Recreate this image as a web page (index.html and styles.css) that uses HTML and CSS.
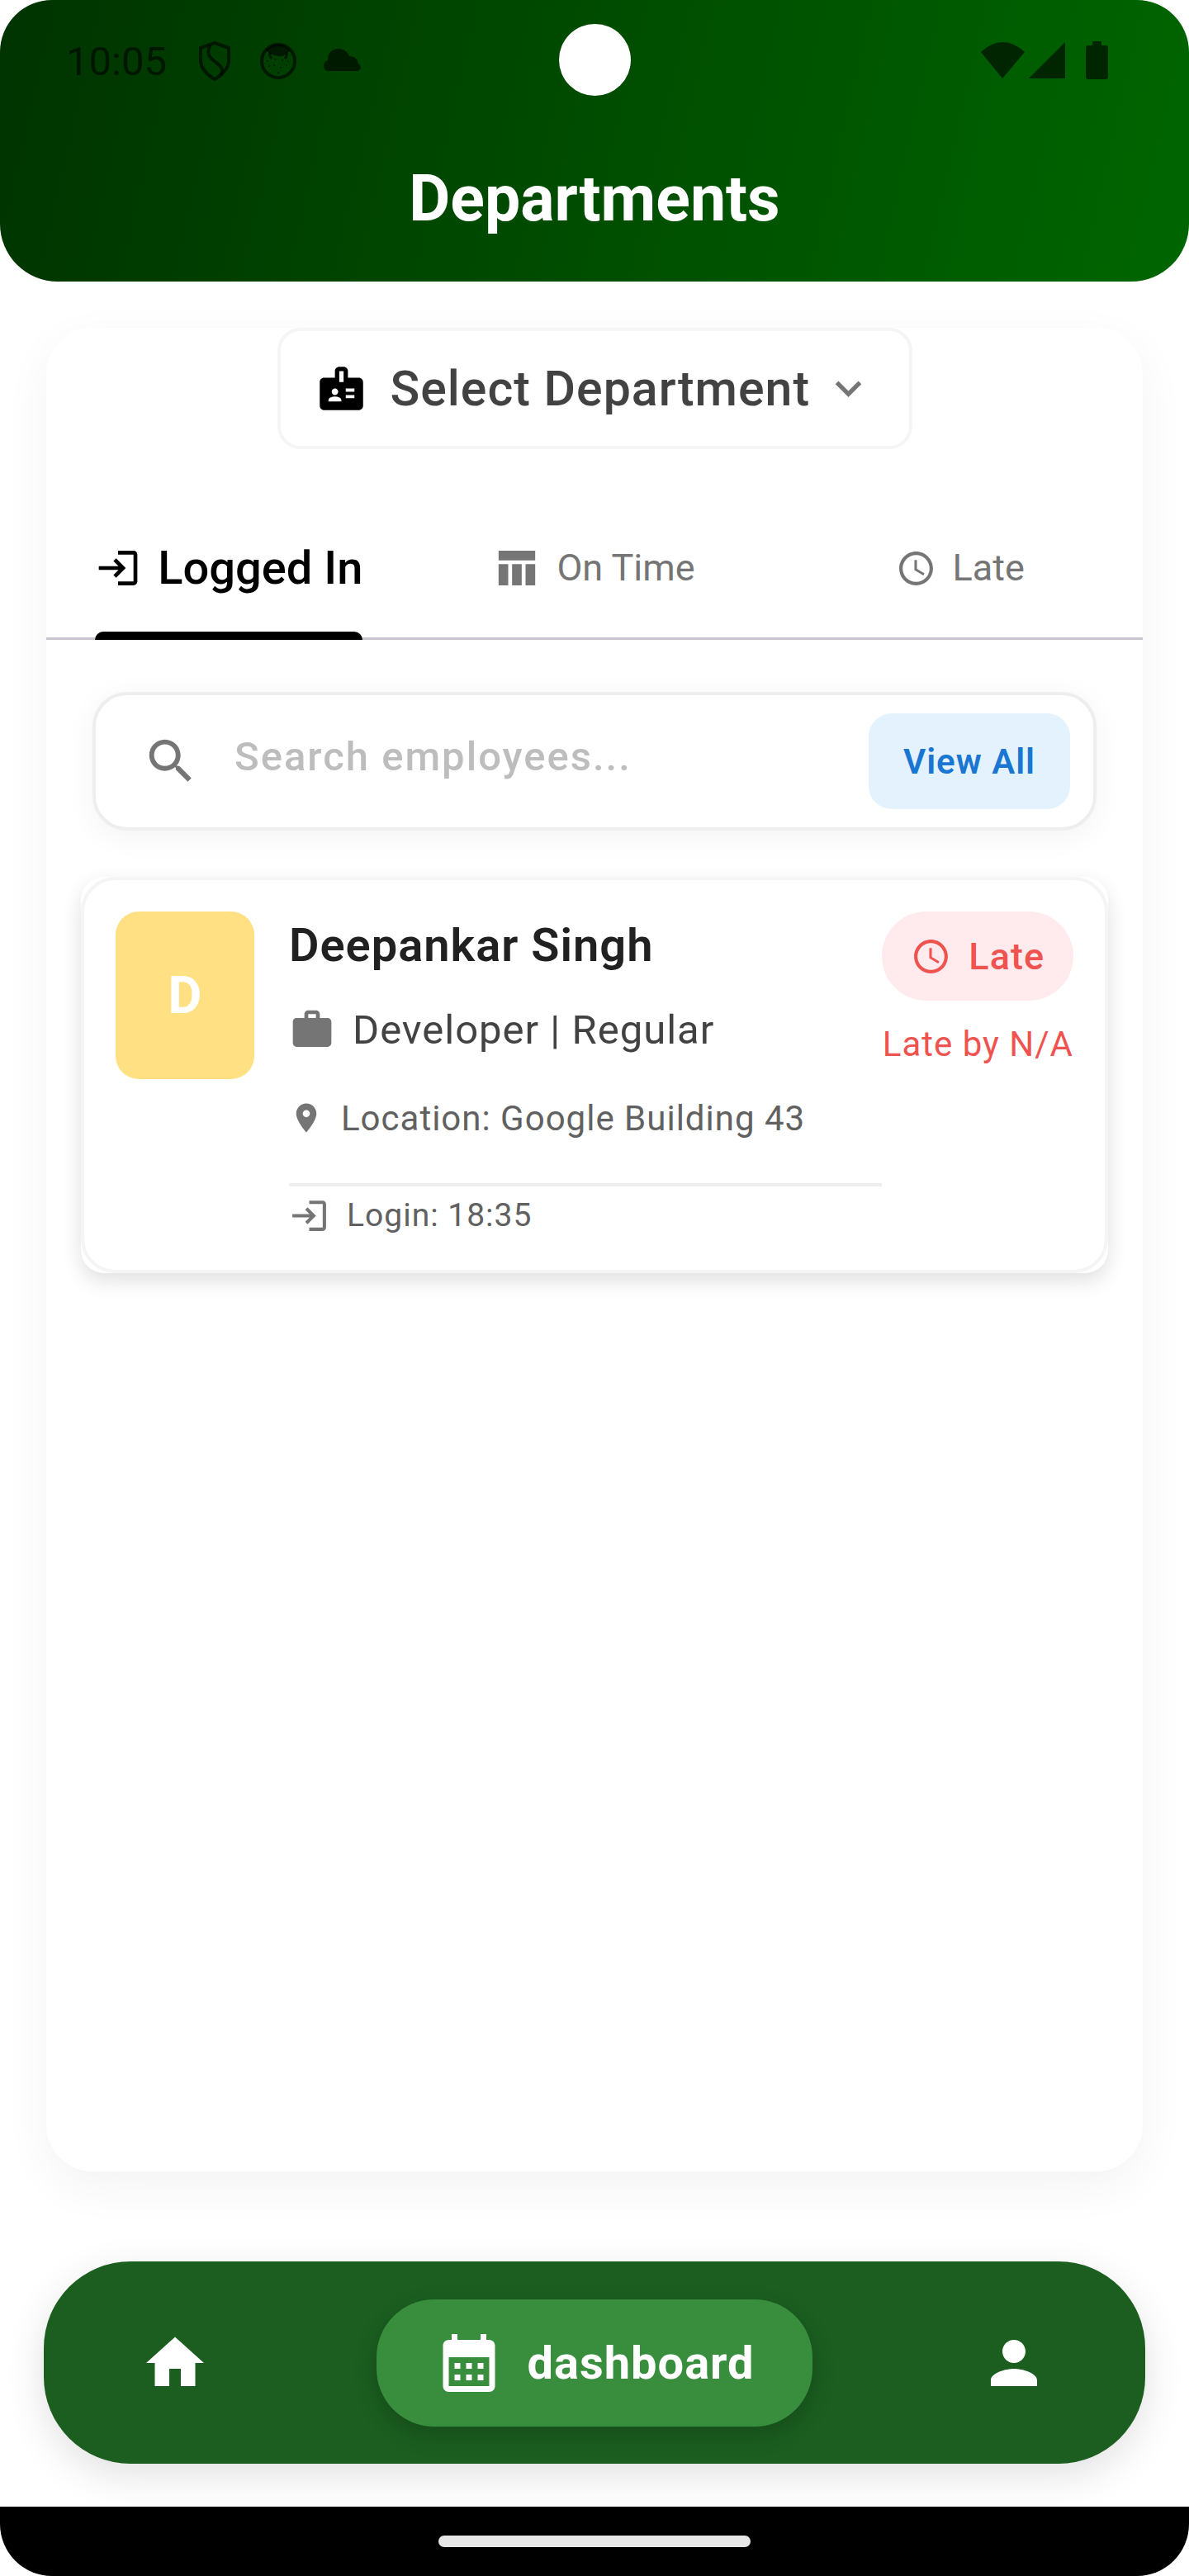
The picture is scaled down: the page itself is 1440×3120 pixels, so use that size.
FILE: index.html
```html
<!DOCTYPE html>
<html lang="en">
<head>
<meta charset="utf-8">
<meta name="viewport" content="width=device-width, initial-scale=1">
<title>Departments</title>
<link rel="stylesheet" href="styles.css">
</head>
<body>
<svg class="symbols" aria-hidden="true">
  <symbol id="login" viewBox="0 0 24 24"><path d="M11 7 9.600 8.400l2.600 2.600H2v2h10.200l-2.600 2.600L11 17l5-5-5-5zm9 12h-8v2h8c1.100 0 2-.9 2-2V5c0-1.100-.9-2-2-2h-8v2h8v14z"/></symbol>
  <symbol id="clock" viewBox="0 0 24 24"><path d="M11.990 2C6.470 2 2 6.480 2 12s4.470 10 9.990 10C17.520 22 22 17.520 22 12S17.520 2 11.990 2zM12 20c-4.420 0-8-3.580-8-8s3.580-8 8-8 8 3.580 8 8-3.580 8-8 8zm.5-13H11v6l5.250 3.150.75-1.230-4.500-2.670z"/></symbol>
</svg>

<header class="header">
  <div class="status">
    <div class="status-left">
      <time class="status-time">10:05</time>
      <svg class="status-icon" viewBox="0 0 49 49"><g fill="none" stroke="currentColor" stroke-width="4" stroke-linejoin="round"><path d="M24 2 41 8V23C41 33 34 40 24 46 14 40 7 33 7 23V8Z"/><path d="M19 5C12 16 20 21 26 26 33 31 35 36 31 41"/></g></svg>
      <svg class="status-icon" viewBox="0 0 49 49"><circle cx="24" cy="24" r="20" fill="none" stroke="currentColor" stroke-width="4"/><path fill="currentColor" d="M9 11Q24-5 39 11L34 15Q30 19 24 18T14 15Z"/><path d="m14 13q-1 5 2 8m18-8q1 5-2 8" fill="none" stroke="currentColor" stroke-width="3"/><g fill="currentColor"><circle cx="20" cy="22" r="1"/><circle cx="29" cy="23" r="1"/><circle cx="11" cy="24" r="1"/><circle cx="13" cy="30" r="1"/><circle cx="19" cy="29" r="1"/><circle cx="27" cy="32" r="1"/><circle cx="36" cy="24" r="1"/><circle cx="34" cy="29" r="1"/><circle cx="24" cy="38" r="1"/></g></svg>
      <svg class="status-icon" viewBox="0 0 49 49"><path fill="currentColor" d="M6 36a7 7 0 0 1 1-13C7 14 12 9 20 9c7 0 11 4 13 9 6 0 10 3 11 9a5 5 0 0 1 0 9Z"/></svg>
    </div>
    <div class="camera"></div>
    <div class="status-right">
      <svg class="wifi" viewBox="0 0 53 44"><path fill="currentColor" d="M0 12Q26-12 53 12L26 44Z"/></svg>
      <svg class="signal" viewBox="0 0 44 44"><path fill="currentColor" d="M44 0V44H0Z"/></svg>
      <svg class="battery" viewBox="0 0 27 46"><path fill="currentColor" d="M8 0H19V5H24Q27 5 27 8V43Q27 46 24 46H3Q0 46 0 43V8Q0 5 3 5H8Z"/></svg>
    </div>
  </div>
  <h1 class="title">Departments</h1>
</header>

<main class="panel">
  <div class="dropdown">
    <svg class="icon-lg badge-icon" viewBox="0 0 24 24"><path fill-rule="evenodd" d="M20 7h-5V4c0-1.100-.9-2-2-2h-2c-1.100 0-2 .9-2 2v3H4c-1.100 0-2 .9-2 2v11c0 1.100.9 2 2 2h16c1.100 0 2-.9 2-2V9c0-1.100-.9-2-2-2zM9 12c.830 0 1.500.670 1.500 1.500S9.830 15 9 15s-1.500-.670-1.500-1.500S8.170 12 9 12zm3 6H6v-.430c0-.6.360-1.150.920-1.390.640-.280 1.340-.430 2.080-.430s1.440.150 2.080.430c.550.240.920.780.920 1.390V18zm1-9h-2V4h2v5zm5 7.500h-4V15h4v1.500zm0-3h-4V12h4v1.500z"/></svg>
    <select class="dropdown-select" aria-label="Department"><option>Select Department</option></select>
    <svg class="icon-lg chevron" viewBox="0 0 24 24"><path d="M7.410 8.590 12 13.170l4.590-4.580L18 10l-6 6-6-6z"/></svg>
  </div>

  <div class="tabs" role="tablist">
    <button class="tab tab-active" role="tab" aria-selected="true"><span class="tab-body"><svg class="icon-md"><use href="#login"/></svg>Logged In</span></button>
    <button class="tab" role="tab" aria-selected="false"><span class="tab-body"><svg class="icon-md" viewBox="0 0 24 24"><path d="M2.500 3h19v5h-19zM2.500 10h5v11h-5zM9.500 10h5v11h-5zM16.500 10h5v11h-5z"/></svg>On Time</span></button>
    <button class="tab" role="tab" aria-selected="false"><span class="tab-body"><svg class="icon-sm"><use href="#clock"/></svg>Late</span></button>
  </div>

  <form class="search" role="search">
    <svg class="search-icon" viewBox="0 0 24 24"><path d="M15.500 14h-.790l-.280-.270C15.410 12.590 16 11.110 16 9.500 16 5.910 13.090 3 9.500 3S3 5.910 3 9.500 5.910 16 9.500 16c1.610 0 3.090-.590 4.230-1.570l.270.280v.790l5 4.990L20.490 19l-4.990-5zm-6 0C7.010 14 5 11.990 5 9.500S7.010 5 9.500 5 14 7.010 14 9.500 11.990 14 9.500 14z"/></svg>
    <input class="search-input" type="text" placeholder="Search employees..." aria-label="Search employees">
    <button class="view-all" type="button">View All</button>
  </form>

  <article class="employee">
    <div class="employee-inner">
      <div class="avatar">D</div>
      <div class="details">
        <h2 class="name">Deepankar Singh</h2>
        <p class="row role"><svg class="icon-md" viewBox="0 0 24 24"><path fill-rule="evenodd" d="M20 6h-4V4c0-1.110-.890-2-2-2h-4c-1.110 0-2 .890-2 2v2H4c-1.110 0-2 .890-2 2v11c0 1.110.890 2 2 2h16c1.110 0 2-.890 2-2V8c0-1.110-.890-2-2-2zm-6 0h-4V4h4v2z"/></svg>Developer | Regular</p>
        <p class="row location"><svg class="icon-xs" viewBox="0 0 24 24"><path d="M12 2C8.130 2 5 5.130 5 9c0 5.250 7 13 7 13s7-7.750 7-13c0-3.870-3.130-7-7-7zm0 9.500c-1.380 0-2.500-1.120-2.500-2.500s1.120-2.500 2.500-2.500 2.500 1.120 2.500 2.500-1.120 2.500-2.500 2.500z"/></svg>Location: Google Building 43</p>
        <hr class="rule">
        <p class="row login"><svg class="icon-sm"><use href="#login"/></svg>Login: 18:35</p>
      </div>
      <div class="state">
        <span class="late-badge"><svg class="icon-sm"><use href="#clock"/></svg>Late</span>
        <span class="late-by">Late by N/A</span>
      </div>
    </div>
  </article>
</main>

<nav class="nav">
  <a class="nav-link" href="#home" aria-label="Home"><svg class="icon-nav" viewBox="0 0 24 24"><path d="M10 20v-6h4v6h5v-8h3L12 3 2 12h3v8z"/></svg></a>
  <a class="nav-link nav-active" href="#dashboard"><svg class="icon-nav" viewBox="0 0 24 24"><path fill-rule="evenodd" d="M19 4h-1V2h-2v2H8V2H6v2H5c-1.100 0-2 .9-2 2v14c0 1.100.9 2 2 2h14c1.100 0 2-.9 2-2V6c0-1.100-.9-2-2-2zm0 16H5V10h14v10z"/><path d="M7 12h2v2H7zM11 12h2v2h-2zM15 12h2v2h-2zM7 16h2v2H7zM11 16h2v2h-2zM15 16h2v2h-2z"/></svg>dashboard</a>
  <a class="nav-link" href="#profile" aria-label="Profile"><svg class="icon-nav" viewBox="0 0 24 24"><path d="M12 12c2.210 0 4-1.790 4-4s-1.790-4-4-4-4 1.790-4 4 1.790 4 4 4zm0 2c-2.670 0-8 1.340-8 4v2h16v-2c0-2.660-5.330-4-8-4z"/></svg></a>
</nav>

<div class="system-bar"><div class="handle"></div></div>
</body>
</html>
```

FILE: styles.css
```css
* {
  box-sizing: border-box;
}

body {
  margin: 0;
  min-height: 100vh;
  display: flex;
  flex-direction: column;
  background: #fff;
  font-family: Roboto, "Liberation Sans", sans-serif;
}

h1, h2, p, hr {
  margin: 0;
}

button, input, select {
  font: inherit;
  border: 0;
  margin: 0;
  padding: 0;
  background: none;
}

svg {
  flex: none;
  display: block;
  fill: currentColor;
}

.symbols {
  display: none;
}

.icon-xs { width: 42px; height: 42px; }
.icon-sm { width: 49px; height: 49px; }
.icon-md { width: 56px; height: 56px; }
.icon-lg { width: 63px; height: 63px; }
.icon-nav { width: 84px; height: 84px; }

/* Header */
.header {
  padding: 29px 0 55px;
  border-radius: 63px 63px 70px 70px;
  background: linear-gradient(103deg, #030, #060);
}

.status {
  display: grid;
  grid-template-columns: 1fr auto 1fr;
  align-items: center;
  color: rgba(0, 0, 0, 0.6);
}

.status-left {
  display: flex;
  align-items: center;
  gap: 28px;
  padding: 4px 0 0 80px;
}

.status-time {
  margin-right: 6px;
  font-size: 49px;
  line-height: 58px;
}

.status-icon {
  width: 49px;
  height: 49px;
}

.camera {
  width: 87px;
  height: 87px;
  border-radius: 50%;
  background: #fff;
}

.status-right {
  display: flex;
  align-items: center;
  justify-content: flex-end;
  gap: 5px;
  padding-right: 98px;
}

.wifi { width: 53px; height: 44px; }
.signal { width: 44px; height: 44px; }
.battery { width: 27px; height: 46px; margin-left: 20px; }

.title {
  margin-top: 80px;
  color: #fff;
  font-size: 77px;
  font-weight: 700;
  line-height: 90px;
  text-align: center;
}

/* Main panel */
.panel {
  flex: 1;
  display: flex;
  flex-direction: column;
  margin: 56px 56px 109px;
  border-radius: 56px;
  background: #fff;
  box-shadow: 0 18px 56px rgba(0, 0, 0, 0.05);
}

.dropdown {
  align-self: center;
  display: flex;
  align-items: center;
  padding: 38px 42px;
  border: 4px solid #f5f5f5;
  border-radius: 28px;
}

.dropdown-select {
  appearance: none;
  margin: 0 14px 0 28px;
  height: 63px;
  color: #424242;
  font-size: 59px;
  font-weight: 500;
  line-height: 63px;
  letter-spacing: 1px;
}

.badge-icon { color: #000; }
.chevron { color: #757575; }

/* Tabs */
.tabs {
  display: grid;
  grid-template-columns: repeat(3, 1fr);
  height: 174px;
  margin-top: 57px;
  border-bottom: 3px solid #cac4d0;
}

.tab {
  display: flex;
  justify-content: center;
  height: 174px;
  color: #757575;
  font-size: 45px;
  line-height: 56px;
}

.tab-body {
  position: relative;
  display: flex;
  align-items: center;
  gap: 20px;
  height: 174px;
}

.tab-active {
  color: #000;
  font-size: 56px;
  font-weight: 500;
}

.tab-active .tab-body::after {
  content: "";
  position: absolute;
  right: 0;
  bottom: 0;
  left: 0;
  height: 10px;
  border-radius: 10px 10px 0 0;
  background: #000;
}

/* Search */
.search {
  display: flex;
  align-items: center;
  margin: 63px 56px 0;
  padding: 22px 28px 22px 56px;
  border: 4px solid #eee;
  border-radius: 42px;
  background: #fff;
  box-shadow: 0 7px 36px rgba(0, 0, 0, 0.05);
}

.search-icon {
  width: 70px;
  height: 70px;
  color: #757575;
}

.search-input {
  flex: 1;
  min-width: 0;
  height: 116px;
  padding: 0 0 12px 42px;
  outline: 0;
  color: #424242;
  font-size: 49px;
  font-weight: 500;
  letter-spacing: 2px;
}

.search-input::placeholder {
  color: #bdbdbd;
  opacity: 1;
}

.view-all {
  height: 116px;
  padding: 0 42px;
  border-radius: 28px;
  background: #e3f2fd;
  color: #1976d2;
  font-size: 42px;
  font-weight: 600;
  letter-spacing: 1px;
}

/* Employee card */
.employee {
  margin: 56px 42px 0;
  border-radius: 28px;
  background: #fff;
  box-shadow: 0 10px 24px rgba(0, 0, 0, 0.12);
}

.employee-inner {
  display: flex;
  align-items: flex-start;
  padding: 38px;
  border: 4px solid #f5f5f5;
  border-radius: 42px;
}

.avatar {
  width: 168px;
  height: 203px;
  margin-right: 42px;
  border-radius: 28px;
  background: #ffe082;
  color: #fff;
  font-size: 63px;
  font-weight: 700;
  line-height: 203px;
  text-align: center;
}

.details {
  flex: 1;
  min-width: 0;
}

.name {
  color: #212121;
  font-size: 56px;
  font-weight: 600;
  line-height: 82px;
  letter-spacing: 1px;
}

.row {
  display: flex;
  align-items: center;
  height: 56px;
  letter-spacing: 1px;
}

.row svg { color: #757575; }

.role {
  gap: 21px;
  margin-top: 33px;
  color: #424242;
  font-size: 49px;
}

.location {
  gap: 21px;
  margin-top: 51px;
  color: #616161;
  font-size: 42px;
}

.rule {
  height: 4px;
  margin-top: 51px;
  border: 0;
  background: #eee;
}

.login {
  gap: 21px;
  margin-top: 7px;
  color: #616161;
  font-size: 39px;
}

.state {
  display: flex;
  flex-direction: column;
  align-items: flex-end;
  gap: 25px;
  color: #ef5350;
}

.late-badge {
  display: flex;
  align-items: center;
  gap: 21px;
  height: 108px;
  padding: 0 35px;
  border-radius: 54px;
  background: #ffebee;
  font-size: 45px;
  font-weight: 500;
  letter-spacing: 1px;
}

.late-by {
  font-size: 42px;
  line-height: 56px;
  letter-spacing: 1px;
}

/* Bottom navigation */
.nav {
  display: flex;
  align-items: center;
  justify-content: space-between;
  height: 245px;
  margin: 0 53px 52px;
  padding: 0 117px;
  border-radius: 105px;
  background: #1b5e20;
  box-shadow: 0 14px 48px rgba(0, 0, 0, 0.12);
}

.nav-link {
  display: flex;
  align-items: center;
  gap: 28px;
  color: #fff;
  text-decoration: none;
}

.nav-active {
  height: 154px;
  padding: 0 70px;
  border-radius: 70px;
  background: #388e3c;
  box-shadow: 0 10px 28px rgba(0, 0, 0, 0.2);
  font-size: 56px;
  font-weight: 700;
  letter-spacing: 1px;
}

.system-bar {
  display: flex;
  align-items: center;
  justify-content: center;
  height: 84px;
  border-radius: 0 0 63px 63px;
  background: #000;
}

.handle {
  width: 378px;
  height: 14px;
  border-radius: 7px;
  background: #e8e8e8;
}
```
